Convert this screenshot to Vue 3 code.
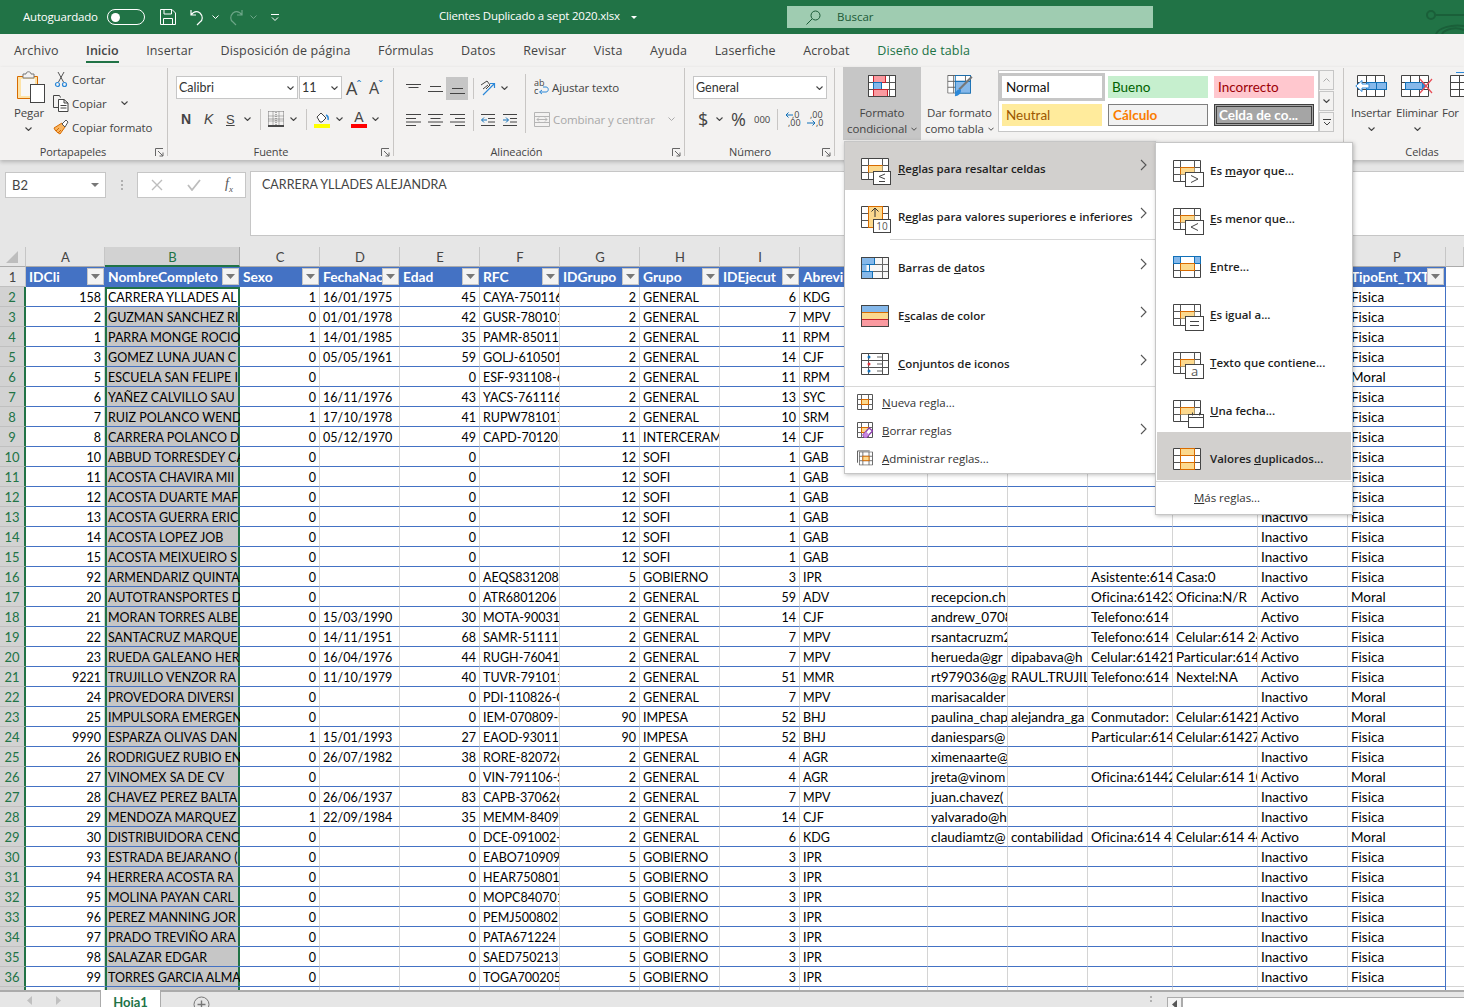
<script setup>
const widths = [79, 135, 80, 80, 80, 80, 80, 80, 80, 128, 80, 80, 85, 85, 90, 98, 18]
const letters = ['A', 'B', 'C', 'D', 'E', 'F', 'G', 'H', 'I', 'J', 'K', 'L', 'M', 'N', 'O', 'P', 'Q']
const headers = ['IDCli', 'NombreCompleto', 'Sexo', 'FechaNac', 'Edad', 'RFC', 'IDGrupo', 'Grupo', 'IDEjecut', 'Abrevi', '', '', '', '', '', 'TipoEnt_TXT']
const rightCols = [0, 2, 4, 6, 8]
const sheetColumns = '26px ' + widths.map((w) => w + 'px').join(' ')

function r(id, name, sexo, fecha, edad, rfc, g, grupo, ej, abr, k = '', l = '', m = '', n = '', o = 'Inactivo', p = 'Fisica') {
  return [id, name, sexo, fecha, edad, rfc, g, grupo, ej, abr, k, l, m, n, o, p, '']
}
const S = (id, name) => r(id, name, 0, '', 0, '', 12, 'SOFI', 1, 'GAB')
const G = (id, name, rfc) => r(id, name, 0, '', 0, rfc, 5, 'GOBIERNO', 3, 'IPR')
const rows = [
  r(158, 'CARRERA YLLADES AL', 1, '16/01/1975', 45, 'CAYA-750116', 2, 'GENERAL', 6, 'KDG'),
  r(2, 'GUZMAN SANCHEZ RI', 0, '01/01/1978', 42, 'GUSR-780101', 2, 'GENERAL', 7, 'MPV'),
  r(1, 'PARRA MONGE ROCIO', 1, '14/01/1985', 35, 'PAMR-85011', 2, 'GENERAL', 11, 'RPM'),
  r(3, 'GOMEZ LUNA JUAN C', 0, '05/05/1961', 59, 'GOLJ-610501', 2, 'GENERAL', 14, 'CJF'),
  r(5, 'ESCUELA SAN FELIPE I', 0, '', 0, 'ESF-931108-6', 2, 'GENERAL', 11, 'RPM', '', '', '', '', 'Inactivo', 'Moral'),
  r(6, 'YAÑEZ CALVILLO SAU', 0, '16/11/1976', 43, 'YACS-761116', 2, 'GENERAL', 13, 'SYC'),
  r(7, 'RUIZ POLANCO WEND', 1, '17/10/1978', 41, 'RUPW781017', 2, 'GENERAL', 10, 'SRM'),
  r(8, 'CARRERA POLANCO D', 0, '05/12/1970', 49, 'CAPD-701205', 11, 'INTERCERAM', 14, 'CJF'),
  S(10, 'ABBUD TORRESDEY CA'),
  S(11, 'ACOSTA CHAVIRA MII'),
  S(12, 'ACOSTA DUARTE MAF'),
  S(13, 'ACOSTA GUERRA ERIC'),
  S(14, 'ACOSTA LOPEZ JOB'),
  S(15, 'ACOSTA MEIXUEIRO S'),
  r(92, 'ARMENDARIZ QUINTA', 0, '', 0, 'AEQS831208', 5, 'GOBIERNO', 3, 'IPR', '', '', 'Asistente:614', 'Casa:0'),
  r(20, 'AUTOTRANSPORTES D', 0, '', 0, 'ATR6801206', 2, 'GENERAL', 59, 'ADV', 'recepcion.ch', '', 'Oficina:61423', 'Oficina:N/R', 'Activo', 'Moral'),
  r(21, 'MORAN TORRES ALBE', 0, '15/03/1990', 30, 'MOTA-90031', 2, 'GENERAL', 14, 'CJF', 'andrew_0708', '', 'Telefono:614', '', 'Activo'),
  r(22, 'SANTACRUZ MARQUE', 0, '14/11/1951', 68, 'SAMR-51111', 2, 'GENERAL', 7, 'MPV', 'rsantacruzm2', '', 'Telefono:614', 'Celular:614 24', 'Activo'),
  r(23, 'RUEDA GALEANO HER', 0, '16/04/1976', 44, 'RUGH-76041', 2, 'GENERAL', 7, 'MPV', 'herueda@gr', 'dipabava@h', 'Celular:61421', 'Particular:614', 'Activo'),
  r(9221, 'TRUJILLO VENZOR RA', 0, '11/10/1979', 40, 'TUVR-791011', 2, 'GENERAL', 51, 'MMR', 'rt979036@gr', 'RAUL.TRUJILL', 'Telefono:614', 'Nextel:NA', 'Activo'),
  r(24, 'PROVEDORA DIVERSI', 0, '', 0, 'PDI-110826-C', 2, 'GENERAL', 7, 'MPV', 'marisacalder', '', '', '', 'Inactivo', 'Moral'),
  r(25, 'IMPULSORA EMERGEN', 0, '', 0, 'IEM-070809-I', 90, 'IMPESA', 52, 'BHJ', 'paulina_chap', 'alejandra_ga', 'Conmutador:', 'Celular:61421', 'Activo', 'Moral'),
  r(9990, 'ESPARZA OLIVAS DAN', 1, '15/01/1993', 27, 'EAOD-93011', 90, 'IMPESA', 52, 'BHJ', 'daniespars@', '', 'Particular:614', 'Celular:61427', 'Activo'),
  r(26, 'RODRIGUEZ RUBIO EN', 0, '26/07/1982', 38, 'RORE-820726', 2, 'GENERAL', 4, 'AGR', 'ximenaarte@'),
  r(27, 'VINOMEX SA DE CV', 0, '', 0, 'VIN-791106-S', 2, 'GENERAL', 4, 'AGR', 'jreta@vinom', '', 'Oficina:61442', 'Celular:614 10', 'Activo', 'Moral'),
  r(28, 'CHAVEZ PEREZ BALTA', 0, '26/06/1937', 83, 'CAPB-370626', 2, 'GENERAL', 7, 'MPV', 'juan.chavez('),
  r(29, 'MENDOZA MARQUEZ', 1, '22/09/1984', 35, 'MEMM-8409', 2, 'GENERAL', 14, 'CJF', 'yalvarado@h'),
  r(30, 'DISTRIBUIDORA CENC', 0, '', 0, 'DCE-091002-', 2, 'GENERAL', 6, 'KDG', 'claudiamtz@', 'contabilidad', 'Oficina:614 43', 'Celular:614 44', 'Activo', 'Moral'),
  G(93, 'ESTRADA BEJARANO (', 'EABO710909'),
  G(94, 'HERRERA ACOSTA RA', 'HEAR750801'),
  G(95, 'MOLINA PAYAN CARL', 'MOPC840701'),
  G(96, 'PEREZ MANNING JOR', 'PEMJ500802'),
  G(97, 'PRADO TREVIÑO ARA', 'PATA671224'),
  G(98, 'SALAZAR EDGAR', 'SAED750213'),
  G(99, 'TORRES GARCIA ALMA', 'TOGA700205'),
  Array(17).fill('')
]

const mainItems = [
  { pre: '', u: 'R', post: 'eglas para resaltar celdas', icon: 'm-resaltar', hot: true },
  { pre: 'R', u: 'e', post: 'glas para valores superiores e inferiores', icon: 'm-superior', sep: true },
  { pre: 'Barras de ', u: 'd', post: 'atos', icon: 'm-barras' },
  { pre: 'E', u: 's', post: 'calas de color', icon: 'm-escalas' },
  { pre: '', u: 'C', post: 'onjuntos de iconos', icon: 'm-iconos' }
]
const smallItems = [
  { u: 'N', post: 'ueva regla...', icon: 'm-nueva' },
  { u: 'B', post: 'orrar reglas', icon: 'm-borrar', arrow: true },
  { u: 'A', post: 'dministrar reglas...', icon: 'm-admin' }
]
const subItems = [
  { pre: 'Es ', u: 'm', post: 'ayor que...', icon: 's-mayor' },
  { pre: '', u: 'E', post: 's menor que...', icon: 's-menor' },
  { pre: '', u: 'E', post: 'ntre...', icon: 's-entre' },
  { pre: '', u: 'E', post: 's igual a...', icon: 's-igual' },
  { pre: '', u: 'T', post: 'exto que contiene...', icon: 's-texto' },
  { pre: '', u: 'U', post: 'na fecha...', icon: 's-fecha' },
  { pre: 'Valores ', u: 'd', post: 'uplicados...', icon: 's-dup', hot: true }
]
const tabs = ['Archivo', 'Inicio', 'Insertar', 'Disposición de página', 'Fórmulas', 'Datos', 'Revisar', 'Vista', 'Ayuda', 'Laserfiche', 'Acrobat', 'Diseño de tabla']
</script>

<template>
  <div class="app">
    <svg class="defs" width="0" height="0">
      <symbol id="chev" viewBox="0 0 7 4"><path d="M.5.5l3 3 3-3" fill="none" stroke="#444" stroke-width="1.1" /></symbol>
      <symbol id="launch" viewBox="0 0 9 9"><path d="M.5 8V.5H8M3 3l5 5M8 4.500V8H4.500" fill="none" stroke="#666" /></symbol>
      <symbol id="right" viewBox="0 0 7 12"><path d="M1 1l5 5-5 5" fill="none" stroke="#555" stroke-width="1.1" /></symbol>
      <symbol id="grid" viewBox="0 0 28 22"><path d="M.5.5h27v21H.5z" fill="#fff" stroke="#444" /><path d="M7.500.5v21M21.500.5v21M.5 7.500h27M.5 14.500h27" fill="none" stroke="#555" /></symbol>
      <symbol id="hl" viewBox="0 0 28 22"><use href="#grid" width="28" height="22" /><rect x="7.500" y="7.500" width="14" height="7" fill="#fcd98e" /><path d="M7.500 14.500v-7h14" fill="none" stroke="#d86b00" /></symbol>
      <symbol id="m-resaltar" viewBox="0 0 32 28"><use href="#hl" width="28" height="22" /><rect x="12.500" y="13.500" width="17" height="13" fill="#fff" stroke="#444" /><path d="M24 16l-6 2.500 6 2.500M18 23.500h6" fill="none" stroke="#444" /></symbol>
      <symbol id="m-superior" viewBox="0 0 32 28"><use href="#grid" width="28" height="22" /><rect x="7.500" y=".5" width="14" height="21" fill="#fcd98e" stroke="#d86b00" /><path d="M14 11V2M10.500 5.500L14 2l3.500 3.500" fill="none" stroke="#333" /><rect x="12.500" y="13.500" width="17" height="13" fill="#fff" stroke="#444" /><text x="21" y="24" font-size="10" font-family="Open Sans" text-anchor="middle" fill="#555">10</text></symbol>
      <symbol id="m-barras" viewBox="0 0 32 28"><use href="#grid" width="28" height="22" /><rect x=".5" y=".5" width="27" height="21" fill="#f7f7f7" /><path d="M7.500.5v21M.5 7.500h27M.5 14.500h27M21.500.5v21" fill="none" stroke="#666" /><rect x=".5" y=".5" width="13" height="7" fill="#85b8ea" stroke="#1170b8" /><rect x=".5" y="7.500" width="8" height="7" fill="#f7f7f7" stroke="#1170b8" /><rect x=".5" y="7.500" width="5" height="7" fill="#85b8ea" stroke="none" /><rect x=".5" y="14.500" width="11" height="7" fill="#85b8ea" stroke="#1170b8" /><path d="M.5.5h27v21H.5z" fill="none" stroke="#444" /></symbol>
      <symbol id="m-escalas" viewBox="0 0 32 28"><rect x=".5" y=".5" width="27" height="7" fill="#85b8ea" stroke="#1170b8" /><rect x=".5" y="7.500" width="27" height="7" fill="#fcd98e" stroke="#d86b00" /><rect x=".5" y="14.500" width="27" height="7" fill="#fa9aa0" stroke="#c8202c" /><path d="M.5.5h27v21H.5z" fill="none" stroke="#444" /></symbol>
      <symbol id="m-iconos" viewBox="0 0 32 28"><use href="#grid" width="28" height="22" /><circle cx="8" cy="4" r="1.500" fill="#1170b8" /><circle cx="8" cy="11" r="1.500" fill="#e0303a" /><circle cx="8" cy="18" r="1.500" fill="#1170b8" /><path d="M16 4h5M16 11h5M16 18h5" stroke="#666" /></symbol>
      <symbol id="sgrid" viewBox="0 0 16 16"><path d="M.5.5h15v15H.5z" fill="#fff" stroke="#555" /><path d="M4.500.5v15M11.500.5v15M.5 5.500h15M.5 10.500h15" stroke="#666" fill="none" /><rect x="4.500" y="5.500" width="7" height="5" fill="#fcd98e" stroke="#d86b00" /></symbol>
      <symbol id="m-nueva" viewBox="0 0 16 16"><use href="#sgrid" width="16" height="16" /></symbol>
      <symbol id="m-borrar" viewBox="0 0 16 16"><use href="#sgrid" width="16" height="16" /><path d="M6 13l6-7 3.500 3-6 6.500H7.500z" fill="#fff" stroke="#8e3fae" stroke-width="1.300" /><path d="M6 13l3-3.500 3 3-2.500 3H7.500z" fill="#c78adf" /></symbol>
      <symbol id="m-admin" viewBox="0 0 17 16"><path d="M.5 13V.5h13" fill="none" stroke="#555" /><use href="#sgrid" x="2" y="1" width="15" height="15" /></symbol>
      <symbol id="boxed" viewBox="0 0 32 28"><use href="#hl" width="28" height="22" /><rect x="12.500" y="12.500" width="18" height="14" fill="#fff" stroke="#444" /></symbol>
      <symbol id="s-mayor" viewBox="0 0 32 28"><use href="#boxed" width="32" height="28" /><path d="M18 15.500l7 3.500-7 3.500" fill="none" stroke="#444" /></symbol>
      <symbol id="s-menor" viewBox="0 0 32 28"><use href="#boxed" width="32" height="28" /><path d="M25 15.500l-7 3.500 7 3.500" fill="none" stroke="#444" /></symbol>
      <symbol id="s-entre" viewBox="0 0 32 28"><use href="#grid" width="28" height="22" /><rect x=".5" y=".5" width="7" height="7" fill="#85b8ea" stroke="#1170b8" /><rect x="21.500" y=".5" width="6" height="7" fill="#85b8ea" stroke="#1170b8" /><path d="M7.500.5h14" stroke="#1170b8" /><rect x="7.500" y="7.500" width="14" height="7" fill="#fcd98e" stroke="#d86b00" /></symbol>
      <symbol id="s-igual" viewBox="0 0 32 28"><use href="#boxed" width="32" height="28" /><path d="M17 17.500h9M17 21.500h9" stroke="#444" /></symbol>
      <symbol id="s-texto" viewBox="0 0 32 28"><use href="#boxed" width="32" height="28" /><text x="21.500" y="24" font-size="13" font-family="Open Sans" text-anchor="middle" fill="#555">a</text></symbol>
      <symbol id="s-fecha" viewBox="0 0 32 28"><use href="#hl" width="28" height="22" /><rect x="15.500" y="14.500" width="15" height="13" fill="#fff" stroke="#444" /><path d="M15.500 17.500h15M19.500 12.500v3M26.500 12.500v3" fill="none" stroke="#444" /></symbol>
      <symbol id="s-dup" viewBox="0 0 32 28"><use href="#grid" width="28" height="22" /><rect x="7.500" y=".5" width="14" height="7" fill="#fcd98e" stroke="#d86b00" /><rect x="7.500" y="7.500" width="14" height="7" fill="#fff" stroke="#d86b00" /><rect x="7.500" y="14.500" width="14" height="7" fill="#fcd98e" stroke="#d86b00" /></symbol>
      <symbol id="al-left" viewBox="0 0 15 12"><path d="M0 .5h15M0 4.500h10M0 8h15M0 11.500h10" stroke="#444" /></symbol>
      <symbol id="al-center" viewBox="0 0 15 12"><path d="M0 .5h15M2.500 4.500h10M0 8h15M2.500 11.500h10" stroke="#444" /></symbol>
      <symbol id="al-right" viewBox="0 0 15 12"><path d="M0 .5h15M5 4.500h10M0 8h15M5 11.500h10" stroke="#444" /></symbol>
    </svg>

    <header class="titlebar">
      <span class="autosave">Autoguardado</span>
      <span class="toggle"><span class="knob"></span></span>
      <svg class="qa-save" width="16" height="16" viewBox="0 0 16 16"><path d="M.5.5H12L15.500 4v11.500H.5zM4 .5V5h7.500V.5M3.500 15.500v-6h9v6" fill="none" stroke="#fff" /></svg>
      <svg class="qa-undo" width="15" height="17" viewBox="0 0 15 17"><path d="M1 1v5h5M1 6c3-4 6-4 9-2 3 3 3 7 0 9l-3 3" fill="none" stroke="#fff" stroke-width="1.200" /></svg>
      <svg class="qa-chev" width="7" height="4"><path d="M.5.5l3 3 3-3" fill="none" stroke="#fff" /></svg>
      <svg class="qa-redo" width="15" height="17" viewBox="0 0 15 17"><path d="M14 1v5H9M14 6c-3-4-6-4-9-2-3 3-3 7 0 9l3 3" fill="none" stroke="#6da688" stroke-width="1.200" /></svg>
      <svg class="qa-chev dim" width="7" height="4"><path d="M.5.5l3 3 3-3" fill="none" stroke="#6da688" /></svg>
      <svg class="qa-more" width="8" height="7" viewBox="0 0 8 7"><path d="M0 .5h8M1 3.500l3 3 3-3" fill="none" stroke="#fff" /></svg>
      <span class="doc-title">Clientes Duplicado a sept 2020.xlsx</span>
      <svg class="doc-caret" width="6" height="3" viewBox="0 0 6 3"><path d="M0 0h6L3 3z" fill="#fff" /></svg>
      <div class="search">
        <svg width="15" height="15" viewBox="0 0 15 15"><circle cx="9.500" cy="5.500" r="4.500" fill="none" stroke="#1b5a37" /><path d="M6 9l-5.500 5.500" stroke="#1b5a37" /></svg>
        <span>Buscar</span>
      </div>
      <svg class="deco" width="40" height="34" viewBox="0 0 40 34"><circle cx="7" cy="15" r="4" fill="none" stroke="#1a5f39" stroke-width="2" /><path d="M11 15h29M40 30a14 8 0 0 0-22 4M40 26a22 10 0 0 0-28 8" fill="none" stroke="#1a5f39" stroke-width="2" /></svg>
    </header>

    <nav class="tabs">
      <span v-for="t in tabs" :key="t" class="tab" :class="{ active: t === 'Inicio', design: t === 'Diseño de tabla' }">{{ t }}</span>
    </nav>

    <section class="ribbon">
      <div class="group g-port">
        <div class="body port-body">
          <div class="paste">
            <svg width="31" height="33" viewBox="0 0 31 33"><path d="M1.500 5.500h20v22h-20z" fill="#fde3a7" stroke="#d86b00" /><path d="M5 8h14v17H5z" fill="#f8f7f5" /><path d="M7 5.500V3h3c0-3 5-3 5 0h3v4H7z" fill="#f3f2f1" stroke="#777" /><rect x="14.500" y="13.500" width="14" height="18" fill="#fff" stroke="#444" /></svg>
            <span>Pegar</span>
            <svg class="chev" width="7" height="4"><use href="#chev" /></svg>
          </div>
          <div class="clip-list">
            <div class="clip-row">
              <svg width="16" height="17" viewBox="0 0 16 17"><path d="M5 1l5.500 10M11 1L5.500 11" fill="none" stroke="#555" /><circle cx="4.500" cy="13.500" r="2" fill="none" stroke="#2b88d8" stroke-width="1.200" /><circle cx="11.500" cy="13.500" r="2" fill="none" stroke="#2b88d8" stroke-width="1.200" /></svg>
              <span>Cortar</span>
            </div>
            <div class="clip-row">
              <svg width="16" height="17" viewBox="0 0 16 17"><path d="M6 12.500H.5V.5h6l1 2" fill="none" stroke="#444" /><path d="M5.500 4.500H11l4 3.500v8.500H5.500zM11 4.500V8h4M7.500 10.500h6M7.500 13h6" fill="#fff" stroke="#444" /></svg>
              <span>Copiar</span>
              <svg class="chev copy-chev" width="7" height="4"><use href="#chev" /></svg>
            </div>
            <div class="clip-row">
              <svg width="16" height="16" viewBox="0 0 16 16"><path d="M1 9l8-5 3 4-5 7c-2-1-5-3-6-6z" fill="#f8b562" stroke="#d86b00" /><path d="M3 12l3-3M5 14l3-3" stroke="#d86b00" /><path d="M9 5l4-4 2 2-3 5z" fill="#fff" stroke="#555" /></svg>
              <span>Copiar formato</span>
            </div>
          </div>
        </div>
        <div class="glabel lb-port"><span></span><span class="lt">Portapapeles</span><svg width="9" height="9"><use href="#launch" /></svg></div>
      </div>

      <div class="group g-font">
        <div class="body">
          <div class="font-row1">
            <div class="select sel-font">Calibri<svg width="7" height="4"><use href="#chev" /></svg></div>
            <div class="select sel-size">11<svg width="7" height="4"><use href="#chev" /></svg></div>
            <span class="growA">A<i>ˆ</i></span>
            <span class="growA small">A<i>ˇ</i></span>
          </div>
          <div class="font-row2">
            <b class="fb-n">N</b>
            <i class="fb-k">K</i>
            <u class="fb-s">S</u>
            <svg class="c1" width="7" height="4"><use href="#chev" /></svg>
            <span class="vsep s1"></span>
            <svg class="bord" width="16" height="16" viewBox="0 0 16 16"><path d="M.5.5h15M.5 5h15M.5 10h15M.5.5v14M5 .5v14M11 .5v14M15.500.5v14" fill="none" stroke="#777" stroke-dasharray="1 1" /><path d="M.5 8h15M8 1v14" stroke="#666" stroke-dasharray="1 1" /><path d="M0 15h16" stroke="#111" stroke-width="1.500" /></svg>
            <svg class="c2" width="7" height="4"><use href="#chev" /></svg>
            <span class="vsep s2"></span>
            <svg class="fill" width="16" height="17" viewBox="0 0 16 17"><path d="M3 6l4-4 5 5-4 4H6z" fill="#fff" stroke="#444" /><path d="M12 4c2 1 2.500 3 2 5" fill="none" stroke="#2b88d8" stroke-width="1.500" /><rect y="13" width="16" height="4" fill="#ffff00" /></svg>
            <svg class="c3" width="7" height="4"><use href="#chev" /></svg>
            <span class="color-a">A</span>
            <svg class="c4" width="7" height="4"><use href="#chev" /></svg>
          </div>
        </div>
        <div class="glabel lb-font"><span></span><span class="lt">Fuente</span><svg width="9" height="9"><use href="#launch" /></svg></div>
      </div>

      <div class="group g-align">
        <div class="body align-body">
          <div class="align-left">
            <div class="al-row">
              <span class="al-btn"><svg width="15" height="8" viewBox="0 0 15 8"><path d="M0 .5h15M2.500 3.500h10" stroke="#444" /></svg></span>
              <span class="al-btn"><svg width="15" height="8" viewBox="0 0 15 8"><path d="M2 2.500h11M0 7.500h15" stroke="#444" /></svg></span>
              <span class="al-btn on"><svg width="15" height="12" viewBox="0 0 15 12"><path d="M2 6.500h11M0 11.500h15" stroke="#444" /></svg></span>
              <span class="vsep al-sep"></span>
              <svg class="orient" width="16" height="16" viewBox="0 0 16 16"><path d="M1 5l6-4M3 9l5-4M7 1l3 4-4 4" fill="none" stroke="#444" /><path d="M3 15L14 4M10 3.500h4.500V8" fill="none" stroke="#2b88d8" stroke-width="1.200" /></svg>
              <svg class="or-chev" width="7" height="4"><use href="#chev" /></svg>
            </div>
            <div class="al-row r2">
              <span class="al-btn"><svg width="15" height="12"><use href="#al-left" /></svg></span>
              <span class="al-btn"><svg width="15" height="12"><use href="#al-center" /></svg></span>
              <span class="al-btn"><svg width="15" height="12"><use href="#al-right" /></svg></span>
              <span class="vsep al-sep"></span>
              <svg class="ind1" width="14" height="12" viewBox="0 0 14 12"><path d="M0 .5h14M7 4.500h7M7 8h7M0 11.500h14" stroke="#444" /><path d="M6 6H.8M3 3.500L.5 6 3 8.500" fill="none" stroke="#1170b8" /></svg>
              <svg class="ind2" width="14" height="12" viewBox="0 0 14 12"><path d="M0 .5h14M7 4.500h7M7 8h7M0 11.500h14" stroke="#444" /><path d="M0 6h5.200M3 3.500L5.500 6 3 8.500" fill="none" stroke="#1170b8" /></svg>
            </div>
          </div>
          <span class="big-sep"></span>
          <div class="align-right">
            <div class="wrap-row">
              <svg width="16" height="16" viewBox="0 0 16 16"><text x="0" y="7" font-size="9" font-family="Open Sans" fill="#444">ab</text><text x="0" y="15" font-size="9" font-family="Open Sans" fill="#444">c</text><path d="M6 13h6c3 0 3-5 0-5H9M8 11l-2.500 2L8 15" fill="none" stroke="#2b88d8" /></svg>
              <span>Ajustar texto</span>
            </div>
            <div class="merge-row">
              <svg width="16" height="15" viewBox="0 0 16 15"><path d="M.5.5h15v14H.5zM.5 4.500h15M.5 10.500h15" fill="none" stroke="#b5b5b5" /><path d="M3 7.500h10M5 5.500l-2 2 2 2M11 5.500l2 2-2 2" fill="none" stroke="#b5b5b5" /></svg>
              <span>Combinar y centrar</span>
              <svg class="merge-chev" width="7" height="4" viewBox="0 0 7 4"><path d="M.5.5l3 3 3-3" fill="none" stroke="#aaa" /></svg>
            </div>
          </div>
        </div>
        <div class="glabel lb-align"><span></span><span class="lt">Alineación</span><svg width="9" height="9"><use href="#launch" /></svg></div>
      </div>

      <div class="group g-num">
        <div class="body">
          <div class="select sel-num">General<svg width="7" height="4"><use href="#chev" /></svg></div>
          <div class="num-row">
            <span class="n-dollar">$</span>
            <svg class="n-c" width="7" height="4"><use href="#chev" /></svg>
            <span class="n-pct">%</span>
            <span class="n-000">000</span>
            <span class="vsep n-sep"></span>
            <svg width="17" height="16" viewBox="0 0 17 16"><text x="7" y="7" font-size="9" font-family="Open Sans" fill="#444">,0</text><text x="3" y="15" font-size="9" font-family="Open Sans" fill="#444">,00</text><path d="M8 4H1M3.500 1.500L1 4l2.500 2.500" fill="none" stroke="#1170b8" /></svg>
            <svg class="n-inc" width="17" height="16" viewBox="0 0 17 16"><text x="3" y="7" font-size="9" font-family="Open Sans" fill="#444">,00</text><text x="9" y="15" font-size="9" font-family="Open Sans" fill="#444">,0</text><path d="M0 12h8M5.500 9.500L8 12l-2.500 2.500" fill="none" stroke="#1170b8" /></svg>
          </div>
        </div>
        <div class="glabel lb-font"><span></span><span class="lt">Número</span><svg width="9" height="9"><use href="#launch" /></svg></div>
      </div>

      <div class="group g-styles">
        <div class="body styles-body">
          <div class="big-btn on">
            <svg width="28" height="22" viewBox="0 0 28 22"><use href="#grid" width="28" height="22" /><rect x="5.500" y=".5" width="12" height="7" fill="#fa9aa0" stroke="#c8202c" /><rect x="5.500" y="7.500" width="8" height="7" fill="#85b8ea" stroke="#1170b8" /><rect x="5.500" y="14.500" width="14" height="7" fill="#fa9aa0" stroke="#c8202c" /><path d="M.5.500h27v21H.5z" fill="none" stroke="#444" /></svg>
            <span>Formato</span>
            <span>condicional <svg width="6" height="4"><use href="#chev" /></svg></span>
          </div>
          <div class="big-btn">
            <svg width="30" height="26" viewBox="0 0 30 26"><use href="#grid" width="28" height="22" /><rect x="9.500" y="7.500" width="18" height="14" fill="#85b8ea" stroke="#1170b8" /><rect x="9.500" y=".5" width="18" height="7" fill="none" stroke="#1170b8" /><path d="M14 17L29 2" stroke="#777" stroke-width="2.500" /><path d="M9 25c0-5 3-9 7-8 1 4-3 8-7 8z" fill="#2b88d8" /></svg>
            <span>Dar formato</span>
            <span>como tabla <svg width="6" height="4"><use href="#chev" /></svg></span>
          </div>
          <div class="gallery">
            <div class="swatches">
              <span class="sw normal">Normal</span>
              <span class="sw bueno">Bueno</span>
              <span class="sw malo">Incorrecto</span>
              <span class="sw neutral">Neutral</span>
              <span class="sw calc">Cálculo</span>
              <span class="sw celda">Celda de co...</span>
            </div>
            <div class="gal-btns">
              <span class="off"><svg width="7" height="4" viewBox="0 0 7 4"><path d="M.5 3.500l3-3 3 3" fill="none" stroke="#aaa" /></svg></span>
              <span><svg width="7" height="4"><use href="#chev" /></svg></span>
              <span><svg width="8" height="7" viewBox="0 0 8 7"><path d="M0 .5h8M1 3l3 3 3-3" fill="none" stroke="#444" /></svg></span>
            </div>
          </div>
        </div>
        <div class="glabel"><span></span><span>Estilos</span><span></span></div>
      </div>

      <div class="group g-cells">
        <div class="body cells-body">
          <div class="cell-btn">
            <svg width="32" height="22" viewBox="0 0 32 22"><path d="M2.500.5h27v21h-27zM2.500 7.500h27M2.500 14.500h27M11.500.5v21M20.500.5v21" fill="#fff" stroke="#444" /><rect x="11.500" y="7.500" width="20" height="7" fill="#85b8ea" stroke="#1170b8" /><path d="M21.500 7.500v7" stroke="#1170b8" /><path d="M14 9v4H7v3.500L.8 11 7 5.500V9z" fill="#fff" stroke="#2b88d8" /></svg>
            <span>Insertar</span>
            <svg width="7" height="4"><use href="#chev" /></svg>
          </div>
          <div class="cell-btn del">
            <svg width="32" height="22" viewBox="0 0 32 22"><path d="M.5.5h27v21H.5zM.5 7.500h27M.5 14.500h27M9.500.5v21M18.500.5v21" fill="#fff" stroke="#444" /><rect x="4.500" y="7.500" width="17" height="7" fill="#85b8ea" stroke="#1170b8" /><path d="M21.500 7l4 4-4 4z" fill="#2b88d8" /><path d="M19 4l12 14M31 4L19 18" stroke="#e84b55" stroke-width="1.200" /></svg>
            <span>Eliminar</span>
            <svg width="7" height="4"><use href="#chev" /></svg>
          </div>
          <div class="cell-btn cut">
            <svg width="32" height="26" viewBox="0 0 32 26"><path d="M.5 4.500h27v21H.5zM.5 11.500h27M.5 18.500h27M9.500 4.500v21M18.500 4.500v21" fill="#fff" stroke="#444" /><path d="M6 1.500h12" stroke="#2b88d8" /></svg>
            <span>For</span>
          </div>
        </div>
        <div class="glabel cells-label"><span></span><span>Celdas</span><span></span></div>
      </div>
    </section>

    <section class="formula">
      <div class="namebox">B2<svg width="8" height="4" viewBox="0 0 8 4"><path d="M0 0h8L4 4z" fill="#777" /></svg></div>
      <span class="dots"><i></i><i></i><i></i></span>
      <div class="fxbox">
        <svg width="12" height="12" viewBox="0 0 12 12"><path d="M1 1l10 10M11 1L1 11" stroke="#bdbdbd" stroke-width="1.400" /></svg>
        <svg width="14" height="12" viewBox="0 0 14 12"><path d="M1 6l4 5 8-10" fill="none" stroke="#bdbdbd" stroke-width="1.800" /></svg>
        <span>f<sub>x</sub></span>
      </div>
      <div class="fbar">CARRERA YLLADES ALEJANDRA</div>
    </section>

    <section class="sheet-wrap">
      <div class="sheet" :style="{ gridTemplateColumns: sheetColumns }">
        <div class="corner"><svg width="14" height="14" viewBox="0 0 14 14"><path d="M12 1v12H0z" fill="#bdbdbd" /></svg></div>
        <div v-for="(l, i) in letters" :key="l" class="colhead" :class="{ cursel: i === 1 }">{{ i === 16 ? '' : l }}</div>

        <div class="rowhead first">1</div>
        <div v-for="(h, i) in headers" :key="'h' + i" class="th" :class="{ last: i === 15 }">
          <span class="th-text">{{ h }}</span>
          <span class="fbtn"><svg width="9" height="5" viewBox="0 0 9 5"><path d="M0 0h9L4.500 5z" fill="#777" /></svg></span>
        </div>
        <div class="td out"></div>

        <template v-for="(row, ri) in rows" :key="ri">
          <div class="rowhead">{{ ri === 36 ? '' : ri + 2 }}</div>
          <div
            v-for="(val, ci) in row"
            :key="ci"
            class="td"
            :class="{ caps: ci <= 9, num: rightCols.includes(ci), insel: ci === 1, active: ci === 1 && ri === 0, last: ci === 15, out: ci === 16 }"
          >{{ val }}</div>
        </template>
      </div>
    </section>

    <footer class="tabbar">
      <svg class="nav-l" width="5" height="9" viewBox="0 0 5 9"><path d="M5 0v9L0 4.500z" fill="#c0c0c0" /></svg>
      <svg class="nav-r" width="5" height="9" viewBox="0 0 5 9"><path d="M0 0v9l5-4.500z" fill="#c0c0c0" /></svg>
      <span class="sheet-tab">Hoja1</span>
      <svg class="add" width="17" height="17" viewBox="0 0 17 17"><circle cx="8.500" cy="8.500" r="7.500" fill="none" stroke="#777" /><path d="M8.500 4.500v8M4.500 8.500h8" stroke="#777" stroke-width="1.400" /></svg>
      <span class="tb-dots"><i></i><i></i></span>
      <div class="hscroll"><span class="hs-left"><svg width="5" height="9" viewBox="0 0 5 9"><path d="M5 0v9L0 4.500z" fill="#555" /></svg></span><span class="hs-track"></span></div>
    </footer>

    <div class="menu main-menu">
      <div v-for="m in mainItems" :key="m.icon" class="mi big" :class="{ hot: m.hot, sep: m.sep }">
        <svg class="mi-ico" width="32" height="28"><use :href="'#' + m.icon" /></svg>
        <span class="mi-text">{{ m.pre }}<u>{{ m.u }}</u>{{ m.post }}</span>
        <svg class="mi-arrow" width="7" height="12"><use href="#right" /></svg>
      </div>
      <div class="divider"></div>
      <div v-for="m in smallItems" :key="m.icon" class="mi small">
        <svg class="mi-ico" width="16" height="16"><use :href="'#' + m.icon" /></svg>
        <span class="mi-text">
          <u>{{ m.u }}</u>{{ m.post }}
        </span>
        <svg v-if="m.arrow" class="mi-arrow" width="7" height="12"><use href="#right" /></svg>
      </div>
    </div>

    <div class="menu sub-menu">
      <div v-for="m in subItems" :key="m.icon" class="mi big" :class="{ hot: m.hot }">
        <svg class="mi-ico" width="32" height="28"><use :href="'#' + m.icon" /></svg>
        <span class="mi-text">{{ m.pre }}<u>{{ m.u }}</u>{{ m.post }}</span>
      </div>
      <div class="divider"></div>
      <div class="more"><u>M</u>ás reglas...</div>
    </div>
  </div>
</template>

<style>
html, body { margin: 0; background: #e6e6e6; }
</style>

<style scoped>
.app { position: relative; width: 1464px; height: 1007px; overflow: hidden; display: flex; flex-direction: column; font-family: "Open Sans", sans-serif; font-size: 12px; color: #444; background: #e6e6e6; font-variant-ligatures: none; }
.defs { position: absolute; }
svg { display: block; flex: none; }

.titlebar { height: 34px; flex: none; display: flex; align-items: center; background: #217346; color: #fff; position: relative; overflow: hidden; }
.autosave { margin: -2px 0 0 23px; width: 84px; font-size: 11.500px; letter-spacing: -.2px; }
.toggle { width: 38px; height: 16px; box-sizing: border-box; border: 1px solid #fff; border-radius: 8px; display: flex; align-items: center; padding-left: 3px; }
.knob { width: 9px; height: 9px; background: #fff; border-radius: 50%; }
.qa-save { margin-left: 15px; }
.qa-undo { margin-left: 14px; }
.qa-chev { margin-left: 7px; }
.qa-redo { margin-left: 9px; }
.qa-chev.dim { margin-left: 7px; }
.qa-more { margin-left: 14px; }
.doc-title { margin: -3px 0 0 160px; width: 192px; font-size: 11.500px; letter-spacing: -.2px; white-space: nowrap; }
.doc-caret { margin-right: 0; }
.search { margin-left: 150px; width: 366px; height: 22px; background: #9fccb1; display: flex; align-items: center; color: #1b5a37; padding-left: 19px; box-sizing: border-box; gap: 16px; font-size: 11.500px; }
.search span { margin-top: -2px; }
.deco { margin-left: auto; }

.tabs { height: 33px; flex: none; display: flex; gap: 27.500px; padding-left: 14px; background: #f3f2f1; align-items: flex-start; }
.tab { font-size: 12.500px; line-height: 29px; height: 25px; padding-top: 2px; letter-spacing: .14px; white-space: nowrap; color: #444; }
.tab.active { border-bottom: 2px solid #217346; font-weight: 600; letter-spacing: 0; }
.tab.design { color: #217346; }

.ribbon { height: 93px; flex: none; box-sizing: border-box; background: #f3f2f1; display: flex; padding: 1px 0 4px; position: relative; z-index: 2; box-shadow: 0 2px 4px rgba(0, 0, 0, .22); font-size: 11.500px; letter-spacing: -.1px; }
.group { display: flex; flex-direction: column; box-sizing: border-box; border-right: 1px solid #c8c6c4; height: 88px; }
.g-port { width: 168px; }
.g-font { width: 226px; }
.g-align { width: 291px; }
.g-num { width: 150px; }
.g-styles { width: 509px; }
.g-cells { flex: 1; border-right: 0; }
.body { height: 78px; flex: none; }
.glabel { display: grid; grid-template-columns: 1fr auto 1fr; align-items: center; height: 12px; line-height: 12px; padding-right: 3px; font-size: 11px; letter-spacing: -.1px; }
.glabel svg { justify-self: end; }
.lb-port .lt { margin-right: 18px; }
.lb-font .lt { margin-right: 16px; }
.lb-align .lt { margin-right: 42px; }

.port-body { display: flex; }
.paste { margin-left: 16px; width: 26px; padding-top: 3px; display: flex; flex-direction: column; align-items: center; }
.paste svg:first-child { margin-left: 5px; }
.paste span { margin-top: 1px; line-height: 16px; }
.paste .chev { margin: 6px 0 0 -2px; }
.clip-list { margin-left: 11px; margin-top: -1px; }
.clip-row { height: 24px; display: flex; align-items: center; gap: 3px; white-space: nowrap; }
.copy-chev { margin-left: 11px; }

.font-row1 { display: flex; padding: 8px 0 0 8px; align-items: center; }
.select { height: 23px; box-sizing: border-box; background: #fff; border: 1px solid #c6c6c6; display: flex; align-items: center; justify-content: space-between; padding: 0 3px 0 2px; font-family: Lato, sans-serif; font-size: 12.500px; letter-spacing: 0; color: #333; }
.sel-font { width: 122px; }
.sel-size { width: 43px; margin-left: 1px; }
.growA { font-size: 18px; line-height: 20px; margin-left: 4px; width: 20px; display: flex; color: #444; letter-spacing: 0; }
.growA.small { font-size: 16px; margin-left: 3px; }
.growA i { font-style: normal; font-size: 12px; line-height: 16px; color: #1170b8; margin-left: -1px; }
.font-row2 { margin-top: 8px; height: 24px; display: flex; align-items: center; padding-left: 13px; font-family: "Liberation Sans", sans-serif; font-size: 14px; letter-spacing: 0; }
.fb-n { width: 10px; }
.fb-k { width: 10px; margin-left: 13px; font-family: "Liberation Sans"; }
.fb-s { width: 10px; margin-left: 12px; font-size: 13px; }
.c1 { margin-left: 8px; }
.vsep { width: 1px; height: 21px; background: #c8c6c4; flex: none; }
.s1 { margin-left: 9px; }
.bord { margin-left: 7px; }
.c2 { margin-left: 6px; }
.s2 { margin-left: 9px; }
.fill { margin-left: 7px; }
.c3 { margin-left: 6px; }
.color-a { margin-left: 8px; width: 16px; text-align: center; line-height: 13px; border-bottom: 4px solid #ff0000; font-size: 14px; }
.c4 { margin-left: 5px; }

.align-body { display: flex; }
.align-left { width: 123px; margin-left: 8px; }
.al-row { height: 24px; margin-top: 8px; display: flex; align-items: center; }
.al-row.r2 { margin-top: 8px; }
.al-btn { width: 22px; height: 23px; display: flex; align-items: center; justify-content: center; }
.al-btn.on { background: #c6c6c6; }
.al-sep { margin-left: 5px; }
.orient { margin-left: 6px; }
.or-chev { margin-left: 5px; }
.ind1 { margin-left: 7px; }
.ind2 { margin-left: 8px; }
.big-sep { width: 1px; height: 59px; margin-top: 6px; background: #c8c6c4; }
.align-right { margin-left: 8px; margin-top: -1px; }
.wrap-row { height: 24px; margin-top: 8px; display: flex; align-items: center; gap: 2px; white-space: nowrap; }
.merge-row { height: 24px; margin-top: 8px; display: flex; align-items: center; gap: 3px; white-space: nowrap; color: #a8a8a8; }
.merge-chev { margin-left: 10px; }

.sel-num { width: 134px; margin: 8px 0 0 8px; }
.num-row { margin-top: 8px; height: 24px; display: flex; align-items: center; padding-left: 13px; letter-spacing: 0; }
.n-dollar { font-size: 18px; width: 12px; }
.n-c { margin-left: 6px; }
.n-pct { margin-left: 8px; font-size: 18px; width: 18px; }
.n-000 { margin-left: 5px; font-size: 9.500px; width: 18px; }
.n-sep { margin: 0 7px 0 5px; }
.n-inc { margin-left: 5px; }

.styles-body { display: flex; margin-top: -1px; padding-left: 8px; height: 79px; }
.big-btn { width: 78px; height: 73px; display: flex; flex-direction: column; align-items: center; padding-top: 8px; box-sizing: border-box; line-height: 16px; }
.big-btn > svg { margin-bottom: 8px; height: 22px; overflow: visible; }
.big-btn.on { background: #c6c6c6; }
.big-btn span { display: flex; align-items: center; gap: 4px; white-space: nowrap; }
.big-btn:nth-child(2) { width: 77px; }
.gallery { margin-top: 3px; display: flex; height: 62px; }
.swatches { width: 321px; height: 62px; box-sizing: border-box; border: 1px solid #c6c6c6; background: #fff; padding: 5px 0 0 3px; display: grid; grid-template-columns: repeat(3, 100px); grid-auto-rows: 22px; gap: 6px; font-family: Lato, sans-serif; font-size: 13.500px; letter-spacing: 0; }
.sw { display: flex; align-items: center; padding-left: 4px; box-sizing: border-box; line-height: 20px; white-space: nowrap; overflow: hidden; }
.normal { box-shadow: 0 0 0 3px #c6c6c6; color: #111; overflow: visible; }
.bueno { background: #c6efce; color: #006100; }
.malo { background: #ffc7ce; color: #9c0006; }
.neutral { background: #ffeb9c; color: #9c5700; }
.calc { background: #f2f2f2; border: 1px solid #7f7f7f; color: #fa7d00; font-weight: 700; }
.celda { background: #a5a5a5; border: 3px double #3f3f3f; color: #fff; font-weight: 700; padding-left: 2px; }
.gal-btns { width: 15px; display: flex; flex-direction: column; gap: 1px; }
.gal-btns span { flex: 1; box-sizing: border-box; border: 1px solid #c6c6c6; background: #f3f2f1; display: flex; align-items: center; justify-content: center; }

.g-cells { overflow: hidden; }
.cells-body { display: flex; padding-left: 7px; margin-top: -1px; height: 79px; letter-spacing: -.25px; }
.cell-btn { width: 46px; display: flex; flex-direction: column; align-items: center; padding-top: 8px; box-sizing: border-box; line-height: 16px; }
.cell-btn span { margin-top: 8px; }
.cell-btn > svg:last-child { margin-top: 6px; }
.cell-btn.del { margin-left: 5px; }
.cell-btn.cut { width: 24px; margin-left: 4px; align-items: flex-start; }
.cell-btn.cut svg { margin: -4px 0 0 8px; }
.cells-label { width: 156px; padding: 0; }

.formula { height: 87px; flex: none; display: flex; background: #e6e6e6; align-items: flex-start; padding: 11px 0 0 5px; box-sizing: border-box; }
.namebox { width: 101px; height: 26px; box-sizing: border-box; background: #fff; border: 1px solid #c6c6c6; display: flex; align-items: center; justify-content: space-between; padding: 0 6px 0 6px; font-family: Lato, sans-serif; font-size: 13px; color: #444; margin-top: 1px; }
.dots { width: 31px; height: 26px; margin-top: 1px; display: flex; flex-direction: column; align-items: center; justify-content: center; gap: 2px; }
.dots i { width: 2px; height: 2px; background: #b0b0b0; }
.fxbox { width: 109px; height: 26px; margin-top: 1px; box-sizing: border-box; background: #fff; border: 1px solid #c6c6c6; display: flex; align-items: center; padding-left: 13px; gap: 24px; font-family: "Liberation Serif", serif; font-style: italic; font-size: 14px; color: #555; }
.fxbox sub { font-size: 9px; }
.fbar { margin-left: 4px; flex: 1; height: 65px; box-sizing: border-box; background: #fff; border: 1px solid #c6c6c6; border-right: 0; padding: 4px 0 0 11px; font-family: Lato, sans-serif; font-size: 12.500px; color: #444; line-height: 18px; }

.sheet-wrap { flex: 1; min-height: 0; overflow: hidden; background: #fff; }
.sheet { display: grid; grid-auto-rows: 20px; font-family: Lato, sans-serif; font-size: 13.500px; color: #000; }
.corner { background: #e6e6e6; border-right: 1px solid #c6c6c6; border-bottom: 1px solid #ababab; box-sizing: border-box; display: flex; align-items: flex-end; justify-content: center; padding-bottom: 2px; }
.colhead { background: #e6e6e6; border-right: 1px solid #c6c6c6; border-bottom: 1px solid #ababab; box-sizing: border-box; text-align: center; line-height: 20px; color: #444; padding-left: 1px; font-size: 13px; }
.colhead.cursel { background: #d2d2d2; color: #217346; border-bottom: 2px solid #217346; border-right-color: #ababab; }
.rowhead { background: #d2d2d2; color: #217346; border-right: 2px solid #217346; border-bottom: 1px solid #c0c0c0; box-sizing: border-box; text-align: center; line-height: 20px; overflow: hidden; font-size: 13px; }
.rowhead.first { background: #e6e6e6; color: #444; border-right: 1px solid #c6c6c6; }
.th { background: #4472c4; color: #fff; font-weight: 700; display: flex; align-items: flex-start; box-sizing: border-box; border-bottom: 1px solid #4472c4; overflow: hidden; line-height: 20px; font-size: 13.800px; }
.th.last { border-right: 1px solid #4472c4; font-size: 13.500px; }
.th-text { flex: 1; min-width: 0; padding-left: 3px; white-space: nowrap; overflow: hidden; }
.fbtn { flex: none; width: 17px; height: 17px; margin: 1px 1px 0 0; box-sizing: border-box; background: #f3f3f3; border: 1px solid #c6c6c6; display: flex; align-items: center; justify-content: center; }
.td { box-sizing: border-box; border-right: 1px solid #d4d4d4; border-bottom: 1px solid #4472c4; padding-left: 3px; white-space: nowrap; overflow: hidden; line-height: 20px; background: #fff; }
.td.caps { font-size: 12.500px; line-height: 22px; }
.td.num { text-align: right; padding: 0 3px 0 0; }
.td.insel { background: #c6c6c6; box-shadow: inset 2px 0 #217346, inset -2px 0 #217346; border-right: 0; }
.td.active { background: #fff; box-shadow: inset 2px 2px #217346, inset -2px 0 #217346; }
.td.last { border-right: 1px solid #4472c4; }
.td.out { border-bottom: 1px solid #d4d4d4; border-right: 0; }

.tabbar { height: 17px; flex: none; position: relative; z-index: 3; display: flex; background: #e6e6e6; border-top: 2px solid #ababab; box-sizing: border-box; align-items: flex-start; }
.nav-l { margin: 4px 0 0 27px; }
.nav-r { margin: 4px 0 0 24px; }
.sheet-tab { margin: -2px 0 0 39px; width: 59px; height: 17px; background: #fff; border-left: 1px solid #ababab; border-right: 1px solid #ababab; box-sizing: content-box; text-align: center; color: #217346; font-family: Lato, sans-serif; font-weight: 700; font-size: 13px; line-height: 24px; }
.add { margin: 4px 0 0 32px; }
.tb-dots { margin: 4px 0 0 940px; width: 2px; display: flex; flex-direction: column; gap: 2px; }
.tb-dots i { width: 2px; height: 2px; background: #b0b0b0; }
.hscroll { margin: 5px 0 0 15px; flex: 1; display: flex; height: 12px; }
.hs-left { width: 15px; height: 12px; box-sizing: border-box; border: 1px solid #ababab; border-bottom: 0; display: flex; justify-content: center; padding-top: 2px; background: #f3f3f3; }
.hs-track { flex: 1; background: #fff; border-top: 1px solid #ababab; border-left: 1px solid #ababab; }

.menu { position: absolute; z-index: 5; background: #fff; box-sizing: border-box; border: 1px solid #c6c6c6; box-shadow: 1px 1px 4px rgba(0, 0, 0, .25); font-size: 11.500px; color: #262626; letter-spacing: -.03px; }
.main-menu { left: 844px; top: 141px; width: 312px; height: 333px; }
.sub-menu { left: 1155px; top: 142px; width: 198px; height: 373px; padding-top: 1px; }
.mi { display: flex; align-items: center; position: relative; white-space: nowrap; }
.mi.big { height: 48px; }
.mi.hot { background: #d2d0ce; }
.mi-text { font-weight: 600; padding-top: 5px; color: #1f1f1f; }
.main-menu .mi.big .mi-ico { margin: 12px 5px 0 16px; width: 32px; height: 28px; }
.sub-menu .mi.big { margin: 0 1px; }
.sub-menu .mi.big .mi-ico { margin: 12px 5px 0 16px; }
.mi-arrow { margin-left: auto; margin-right: 8px; margin-top: -3px; }
.mi.sep::after { content: ""; position: absolute; left: 45px; right: 0; bottom: -2px; height: 1px; background: #d8d8d8; }
.mi.sep + .mi { margin-top: 3px; }
.divider { height: 1px; margin: 1px 0; background: #d8d8d8; }
.mi.small { height: 28px; }
.mi.small .mi-ico { margin: 0 9px 0 12px; }
.mi.small .mi-text { font-weight: 400; padding-top: 0; color: #333; }
.more { padding: 7px 0 0 38px; color: #333; }
</style>
